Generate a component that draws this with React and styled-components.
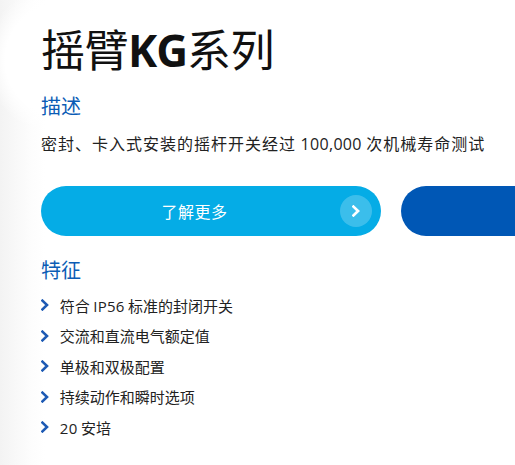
import React from "react";
import styled, { createGlobalStyle } from "styled-components";

const Global = createGlobalStyle`
  html, body { margin: 0; padding: 0; }
  body {
    background: #ffffff;
    font-family: "Noto Sans CJK SC", "Noto Sans", sans-serif;
    color: #1a1a1a;
  }
`;

const Page = styled.div`
  width: 515px;
  height: 465px;
  overflow: hidden;
  background:
    radial-gradient(circle at 60px 60px, #ffffff 0, #ffffff 55px, rgba(255,255,255,0) 75px),
    linear-gradient(90deg, #f3f3f3 0px, #f8f8f8 15px, #fdfdfd 32px, #ffffff 45px);
  box-sizing: border-box;
  padding: 16px 0 0 41px;
  display: flex;
  flex-direction: column;
`;

const Title = styled.h1`
  margin: 0;
  font-size: 44px;
  line-height: 64px;
  font-weight: 400;
  color: #111;
  letter-spacing: -0.5px;
  white-space: nowrap;
`;

const Latin = styled.span`
  font-family: "Open Sans", "Noto Sans", sans-serif;
  font-weight: 700;
  letter-spacing: -1px;
`;

const SectionHead = styled.h2`
  margin: ${(p) => p.$top}px 0 0;
  font-size: 20px;
  line-height: 28px;
  font-weight: 400;
  color: #0b5cb5;
`;

const Desc = styled.p`
  margin: 11px 0 0;
  font-size: 16px;
  line-height: 24px;
  letter-spacing: 1px;
  color: #222;
  white-space: nowrap;
`;

const Num = styled.span`
  font-family: "Open Sans", "Noto Sans", sans-serif;
  letter-spacing: 0.3px;
`;

const Buttons = styled.div`
  display: flex;
  gap: 20px;
  margin-top: 30px;
`;

const Pill = styled.div`
  flex: none;
  width: ${(p) => p.$w}px;
  height: 50px;
  border-radius: 25px;
  background: ${(p) => p.$bg};
  display: flex;
  align-items: center;
  box-sizing: border-box;
  padding: 0 9px 0 0;
  color: #fff;
`;

const PillLabel = styled.span`
  flex: 1;
  text-align: center;
  font-size: 16px;
  letter-spacing: 0.5px;
  padding-left: 8px;
`;

const IconCircle = styled.span`
  width: 32px;
  height: 32px;
  border-radius: 50%;
  background: rgba(255, 255, 255, 0.22);
  display: flex;
  align-items: center;
  justify-content: center;
`;

const List = styled.ul`
  list-style: none;
  margin: 6px 0 0;
  padding: 0;
  display: flex;
  flex-direction: column;
`;

const Item = styled.li`
  display: flex;
  align-items: center;
  height: 30.5px;
  font-size: 15px;
  color: #222;
  gap: 11px;
`;

const Chevron = ({ size = 12, color = "#1d5ab4", width = 2.6 }) => (
  <svg width={size * 0.65} height={size} viewBox="0 0 8 12" fill="none">
    <path d="M1.5 1.5 L6.2 6 L1.5 10.5" stroke={color} strokeWidth={width} strokeLinecap="square" strokeLinejoin="miter" />
  </svg>
);

const features = [
  ["符合 ", "IP56", " 标准的封闭开关"],
  ["交流和直流电气额定值"],
  ["单极和双极配置"],
  ["持续动作和瞬时选项"],
  ["", "20", " 安培"],
];

export default function App() {
  return (
    <>
      <Global />
      <Page>
        <Title>
          摇臂<Latin>KG</Latin>系列
        </Title>
        <SectionHead $top={10}>描述</SectionHead>
        <Desc>
          密封、卡入式安装的摇杆开关经过 <Num>100,000</Num> 次机械寿命测试
        </Desc>
        <Buttons>
          <Pill $w={340} $bg="#05ace6">
            <PillLabel>了解更多</PillLabel>
            <IconCircle>
              <Chevron size={12} color="#fff" width={2.8} />
            </IconCircle>
          </Pill>
          <Pill $w={300} $bg="#0057b5" />
        </Buttons>
        <SectionHead $top={20}>特征</SectionHead>
        <List>
          {features.map((f, i) => (
            <Item key={i}>
              <Chevron />
              <span>
                {f[0]}
                {f[1] && <Num>{f[1]}</Num>}
                {f[2]}
              </span>
            </Item>
          ))}
        </List>
      </Page>
    </>
  );
}
